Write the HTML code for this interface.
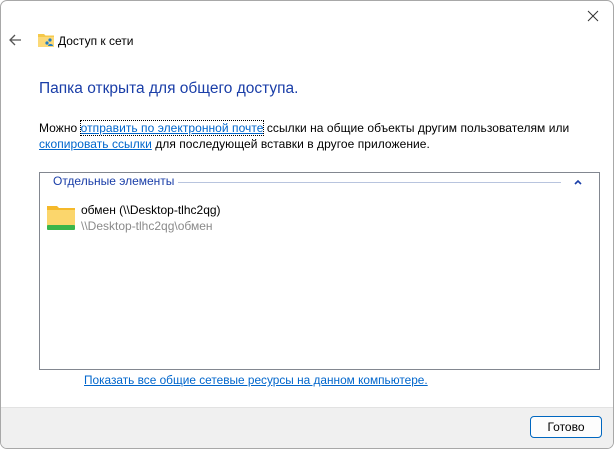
<!DOCTYPE html>
<html><head><meta charset="utf-8"><style>
*{margin:0;padding:0;box-sizing:border-box}
body{width:614px;height:449px;overflow:hidden;background:#fff;font-family:"Segoe UI","Liberation Sans",sans-serif;font-size:12px;color:#000;position:relative}
.win{position:absolute;left:0;top:0;width:614px;height:449px;border:1px solid #a8a8a8;border-radius:7px;background:#fff;overflow:hidden}
.a{position:absolute;white-space:nowrap}
a{color:#0066cc;text-decoration:underline}
.footer{position:absolute;left:0;top:406px;width:614px;height:42px;background:#f0f0f0;border-top:1px solid #e2e2e2}
.btn{position:absolute;left:529px;top:415px;width:72px;height:22px;border:1px solid #0067c0;border-radius:4px;background:#fdfdfd;text-align:center;line-height:20px;font-size:12px}
.box{position:absolute;left:38px;top:171px;width:561px;height:198px;border:1px solid #828790}
</style></head><body><div class="win">
<svg class="a" style="left:7px;top:32px" width="14" height="14" viewBox="0 0 14 14"><path d="M13 7H2M7 2L2 7l5 5" stroke="#555" stroke-width="1.3" fill="none"/></svg>
<svg class="a" style="left:36px;top:31px" width="18" height="16" viewBox="0 0 18 16"><path d="M1 2h6l1.5 1.5H17V15H1z" fill="#f5c94a"/><path d="M1 5h16v10H1z" fill="#fbd978"/><circle cx="13" cy="8" r="1.6" fill="#1f7bc5"/><circle cx="10" cy="11" r="1.6" fill="#1f7bc5"/><path d="M11 14a2.5 2 0 0 1 5 0z" fill="#1f7bc5"/></svg>
<div class="a" style="left:57px;top:33px;font-size:12px">Доступ к сети</div>
<svg class="a" style="left:586px;top:9px" width="12" height="12" viewBox="0 0 12 12"><path d="M1 1l10 10M11 1L1 11" stroke="#333" stroke-width="1"/></svg>
<div class="a" style="left:38px;top:79px;font-size:15.5px;color:#1a3ea8">Папка открыта для общего доступа.</div>
<div class="a" style="left:38px;top:119px;line-height:16px;letter-spacing:0.05px">Можно <a style="outline:1px dotted #000">отправить по электронной почте</a> ссылки на общие объекты другим пользователям или<br><a>скопировать ссылки</a> для последующей вставки в другое приложение.</div>
<div class="box"></div>
<div class="a" style="left:50px;width:510px;height:1px;background:#b8c4de;top:181px"></div>
<div class="a" style="left:48px;top:173px;background:#fff;padding:0 4px;color:#1a3ea8">Отдельные элементы</div>
<svg class="a" style="left:573px;top:178px" width="8" height="6" viewBox="0 0 8 6"><path d="M1 5l3-3 3 3" stroke="#1a3ea8" stroke-width="1.6" fill="none"/></svg>
<svg class="a" style="left:45px;top:204px" width="30" height="26" viewBox="0 0 30 26"><path d="M1 1h10l2 2h16v20H1z" fill="#f5b92a"/><path d="M1 5h28v18H1z" fill="#fbd66c"/><rect x="1" y="20" width="28" height="5" rx="1" fill="#3bb54a"/></svg>
<div class="a" style="left:80px;top:202px">обмен (\\Desktop-tlhc2qg)</div>
<div class="a" style="left:80px;top:218px;color:#8a8a8a">\\Desktop-tlhc2qg\обмен</div>
<div class="a" style="left:83px;top:372px;font-size:11.85px"><a>Показать все общие сетевые ресурсы на данном компьютере.</a></div>
<div class="footer"></div>
<div class="btn">Готово</div>
</div></body></html>
